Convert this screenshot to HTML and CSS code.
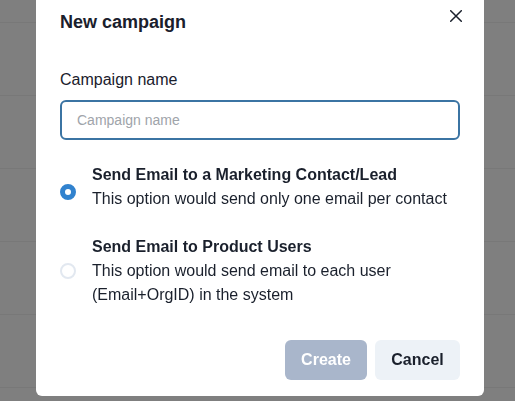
FILE: index.html
```html
<!DOCTYPE html>
<html lang="en">
<head>
<meta charset="utf-8">
<title>New campaign</title>
<link rel="stylesheet" href="styles.css">
</head>
<body>
<div class="page">
  <div class="row row-first"></div>
  <div class="row"></div>
  <div class="row"></div>
  <div class="row"></div>
  <div class="row"></div>
  <div class="row"></div>
</div>
<div class="overlay">
  <section class="modal" role="dialog" aria-labelledby="modal-title">
    <header class="modal-header">
      <h2 id="modal-title" class="modal-title">New campaign</h2>
      <button class="close-btn" aria-label="Close">
        <svg width="12" height="12" viewBox="0 0 12 12" aria-hidden="true">
          <path d="M0.7 0.7 L11.3 11.3 M11.3 0.7 L0.7 11.3" stroke="#1a202c" stroke-width="1.5" fill="none" stroke-linecap="round"/>
        </svg>
      </button>
    </header>
    <div class="modal-body">
      <label class="field-label" for="campaign-name">Campaign name</label>
      <input class="field-input" id="campaign-name" type="text" placeholder="Campaign name">
      <div class="radio-group">
        <label class="radio-option">
          <span class="radio radio-checked radio-first"></span>
          <span class="radio-text">
            <span class="radio-title">Send Email to a Marketing Contact/Lead</span>
            <span class="radio-desc">This option would send only one email per contact</span>
          </span>
        </label>
        <label class="radio-option">
          <span class="radio"></span>
          <span class="radio-text">
            <span class="radio-title">Send Email to Product Users</span>
            <span class="radio-desc">This option would send email to each user<br>(Email+OrgID) in the system</span>
          </span>
        </label>
      </div>
    </div>
    <footer class="modal-footer">
      <button class="btn btn-primary" disabled>Create</button>
      <button class="btn btn-secondary">Cancel</button>
    </footer>
  </section>
</div>
</body>
</html>
```

FILE: styles.css
```css
* { box-sizing: border-box; }
html, body {
  margin: 0;
  padding: 0;
  height: 100%;
  overflow: hidden;
}
body {
  background: #ffffff;
  font-family: "Liberation Sans", Arial, sans-serif;
  color: #1a202c;
}
.page {
  display: flex;
  flex-direction: column;
}
.row {
  height: 73px;
  flex: none;
  border-bottom: 1px solid #f0f0f0;
}
.row-first { height: 23px; }

.overlay {
  position: fixed;
  inset: 0;
  padding-left: 5px;
  background: rgba(0, 0, 0, 0.5);
  display: flex;
  justify-content: center;
  align-items: flex-start;
}
.modal {
  position: relative;
  width: 448px;
  margin-top: -8px;
  background: #ffffff;
  border-radius: 6px;
  display: flex;
  flex-direction: column;
}
.modal-header {
  padding: 16px 24px;
}
.modal-title {
  margin: 0;
  font-size: 18px;
  line-height: 28px;
  font-weight: 700;
}
.close-btn {
  position: absolute;
  top: 8px;
  right: 12px;
  width: 32px;
  height: 32px;
  border: 0;
  background: transparent;
  padding: 0;
  display: flex;
  align-items: center;
  justify-content: center;
  border-radius: 6px;
}
.modal-body {
  padding: 8px 24px 8px;
  display: flex;
  flex-direction: column;
}
.field-label {
  margin-top: 8px;
  font-size: 16px;
  line-height: 24px;
  margin-bottom: 8px;
}
.field-input {
  height: 40px;
  width: 100%;
  border: 2px solid #3b74a3;
  border-radius: 6px;
  padding: 0 15px;
  font-family: inherit;
  font-size: 14px;
  color: #1a202c;
  outline: none;
}
.field-input::placeholder { color: #a0a4aa; }

.radio-group {
  margin-top: 23px;
  margin-bottom: 9px;
  display: flex;
  flex-direction: column;
  gap: 24px;
}
.radio-option {
  display: flex;
  align-items: center;
  gap: 16px;
}
.radio {
  flex: none;
  width: 16px;
  height: 16px;
  border-radius: 50%;
  border: 2px solid #e2e8f0;
  background: #fff;
}
.radio-checked {
  border: 5px solid #3182ce;
  background: #fff;
}
.radio-first { margin-top: 10px; }
.radio-text {
  display: flex;
  flex-direction: column;
  font-size: 16px;
  line-height: 24px;
}
.radio-title { font-weight: 700; }
.radio-desc { font-weight: 400; }

.modal-footer {
  padding: 16px 24px;
  display: flex;
  justify-content: flex-end;
  gap: 8px;
}
.btn {
  height: 40px;
  border: 0;
  border-radius: 6px;
  padding: 0 16px;
  font-family: "Liberation Sans", Arial, sans-serif;
  font-size: 16px;
  font-weight: 700;
}
.btn-primary {
  background: #a9b6cb;
  color: #ffffff;
  width: 82px;
}
.btn-secondary {
  background: #edf2f7;
  color: #1a202c;
  width: 85px;
}
```
